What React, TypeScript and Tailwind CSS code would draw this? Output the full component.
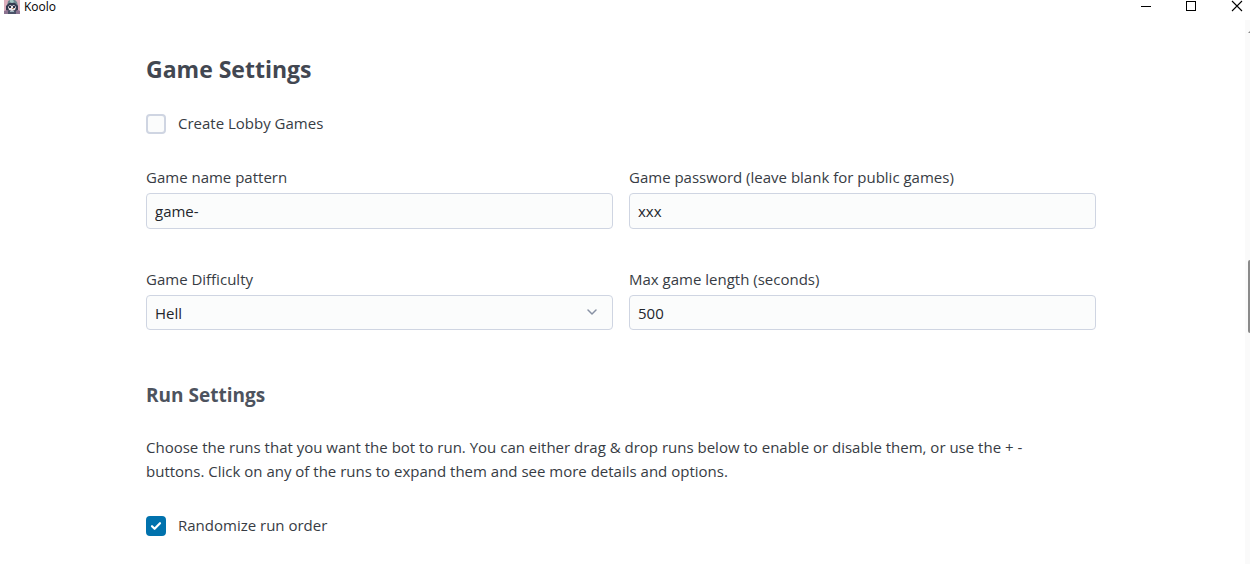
import { useState } from "react";
import type { ReactNode } from "react";

const fieldClass =
  "block w-full appearance-none rounded-sm border border-[#cfd5e2] bg-[#fbfcfc] px-2 text-[15px] leading-6 text-[#23262c] outline-none focus:border-[#0172ad]";

function AppIcon() {
  return (
    <svg viewBox="0 0 16 16" className="h-4 w-4 shrink-0" aria-hidden="true">
      <rect width="16" height="14" fill="#dcaebd" />
      <path d="M4 1l2-1h5l2 2 1 4H3z" fill="#6f8790" />
      <path d="M6 0h3l1 2-2 1-2-1z" fill="#a3c4c2" />
      <path d="M2 6l3-3h6l3 3v4l-2 2H4L2 10z" fill="#343a4f" />
      <path d="M4 7l2-2 2 1 2-1 2 2-1 3-3 1-3-1z" fill="#ece6ea" />
      <path d="M5 6l2 0v2H5zM9 6h2v2H9z" fill="#2b3044" />
      <path d="M8 8h2v1H8z" fill="#b98a6a" />
      <path d="M0 11l3-1 3 1h5l3-1 2 1v3H0z" fill="#8b7390" />
      <path d="M4 11h8v3H4z" fill="#4a5268" />
      <path d="M6 11h4v1H6z" fill="#9db4bd" />
    </svg>
  );
}

function TitleBar() {
  return (
    <header className="flex h-5 items-start justify-between pl-1">
      <div className="flex items-start gap-1">
        <AppIcon />
        <span className="font-['Open_Sans','Noto_Sans',sans-serif] text-[12px] leading-[14px] text-black">
          Koolo
        </span>
      </div>
      <div className="flex gap-[29px] pr-[5px]">
        <button type="button" aria-label="Minimize" className="h-4 w-4">
          <svg viewBox="0 0 16 16" className="h-4 w-4" shapeRendering="crispEdges">
            <path d="M2 6h10v1H2z" fill="#000" />
          </svg>
        </button>
        <button type="button" aria-label="Maximize" className="h-4 w-4">
          <svg viewBox="0 0 16 16" className="h-4 w-4" shapeRendering="crispEdges">
            <rect x="2.5" y="1.5" width="9" height="9" fill="none" stroke="#000" />
          </svg>
        </button>
        <button type="button" aria-label="Close" className="h-4 w-4">
          <svg viewBox="0 0 16 16" className="h-4 w-4">
            <path d="M3 1l10 10M13 1L3 11" fill="none" stroke="#000" strokeWidth="1.1" />
          </svg>
        </button>
      </div>
    </header>
  );
}

function CheckField({ id, label, initial }: { id: string; label: string; initial: boolean }) {
  const [checked, setChecked] = useState(initial);
  return (
    <div className="flex items-start gap-3">
      <span className="grid pt-[3px]">
        <input
          id={id}
          type="checkbox"
          checked={checked}
          onChange={(e) => setChecked(e.target.checked)}
          className="col-start-1 row-start-1 h-5 w-5 appearance-none rounded border-2 border-[#cfd5e2] bg-[#fbfcfc] checked:border-[#0172ad] checked:bg-[#0172ad]"
        />
        {checked && (
          <svg
            viewBox="0 0 20 20"
            className="pointer-events-none col-start-1 row-start-1 h-5 w-5"
            aria-hidden="true"
          >
            <path
              d="M6 10.2l2.6 2.6L14 7.2"
              fill="none"
              stroke="#fff"
              strokeWidth="2.2"
              strokeLinecap="round"
              strokeLinejoin="round"
            />
          </svg>
        )}
      </span>
      <label htmlFor={id}>{label}</label>
    </div>
  );
}

function Field({ id, label, children }: { id: string; label: string; children: ReactNode }) {
  return (
    <div className="min-w-0">
      <label htmlFor={id} className="mb-1 block">
        {label}
      </label>
      {children}
    </div>
  );
}

function ScrollTrack() {
  return (
    <div className="flex w-[5px] shrink-0 flex-col items-end overflow-hidden bg-[#fafafa]" aria-hidden="true">
      <svg viewBox="0 0 2 12" className="mt-[10px] h-3 w-[2px]">
        <path d="M2 1v2H0z" fill="#8a8a8a" />
      </svg>
      <div className="mt-[218px] h-[73px] w-[2px] rounded-l-sm bg-[#8a8a8a]" />
    </div>
  );
}

export default function App() {
  return (
    <div className="flex min-h-screen flex-col bg-white font-['Open_Sans','Noto_Sans',sans-serif] text-[15px] leading-6 text-[#373c44]">
      <TitleBar />
      <div className="flex flex-1">
        <main className="min-w-0 flex-1 pt-[35px] pr-[3px] pb-7">
          <div className="mx-auto max-w-[950px]">
            <h2 className="text-[23px] leading-7 font-bold text-[#424751]">Game Settings</h2>
            <div className="mt-7">
              <CheckField id="lobby" label="Create Lobby Games" initial={false} />
            </div>
            <div className="mt-[30px] grid grid-cols-2 gap-x-4 gap-y-[38px]">
              <Field id="name" label="Game name pattern">
                <input id="name" defaultValue="game-" className={`${fieldClass} h-9`} />
              </Field>
              <Field id="password" label="Game password (leave blank for public games)">
                <input id="password" defaultValue="xxx" className={`${fieldClass} h-9`} />
              </Field>
              <Field id="difficulty" label="Game Difficulty">
                <div className="grid items-center">
                  <select
                    id="difficulty"
                    defaultValue="Hell"
                    className={`${fieldClass} col-start-1 row-start-1 h-[35px]`}
                  >
                    <option>Normal</option>
                    <option>Nightmare</option>
                    <option>Hell</option>
                  </select>
                  <svg
                    viewBox="0 0 16 16"
                    className="pointer-events-none col-start-1 row-start-1 mr-3 h-4 w-4 justify-self-end"
                    aria-hidden="true"
                  >
                    <path
                      d="M3 5l4 4 4-4"
                      fill="none"
                      stroke="#8891a4"
                      strokeWidth="1.5"
                      strokeLinecap="round"
                      strokeLinejoin="round"
                    />
                  </svg>
                </div>
              </Field>
              <Field id="length" label="Max game length (seconds)">
                <input id="length" defaultValue="500" className={`${fieldClass} h-[35px]`} />
              </Field>
            </div>
            <h3 className="mt-[53px] text-[19px] leading-6 font-bold text-[#4d535e]">Run Settings</h3>
            <p className="mt-7 pr-8">
              Choose the runs that you want the bot to run. You can either drag &amp; drop runs below to
              enable or disable them, or use the + - buttons. Click on any of the runs to expand them and
              see more details and options.
            </p>
            <div className="mt-[30px]">
              <CheckField id="randomize" label="Randomize run order" initial={true} />
            </div>
          </div>
        </main>
        <ScrollTrack />
      </div>
    </div>
  );
}
